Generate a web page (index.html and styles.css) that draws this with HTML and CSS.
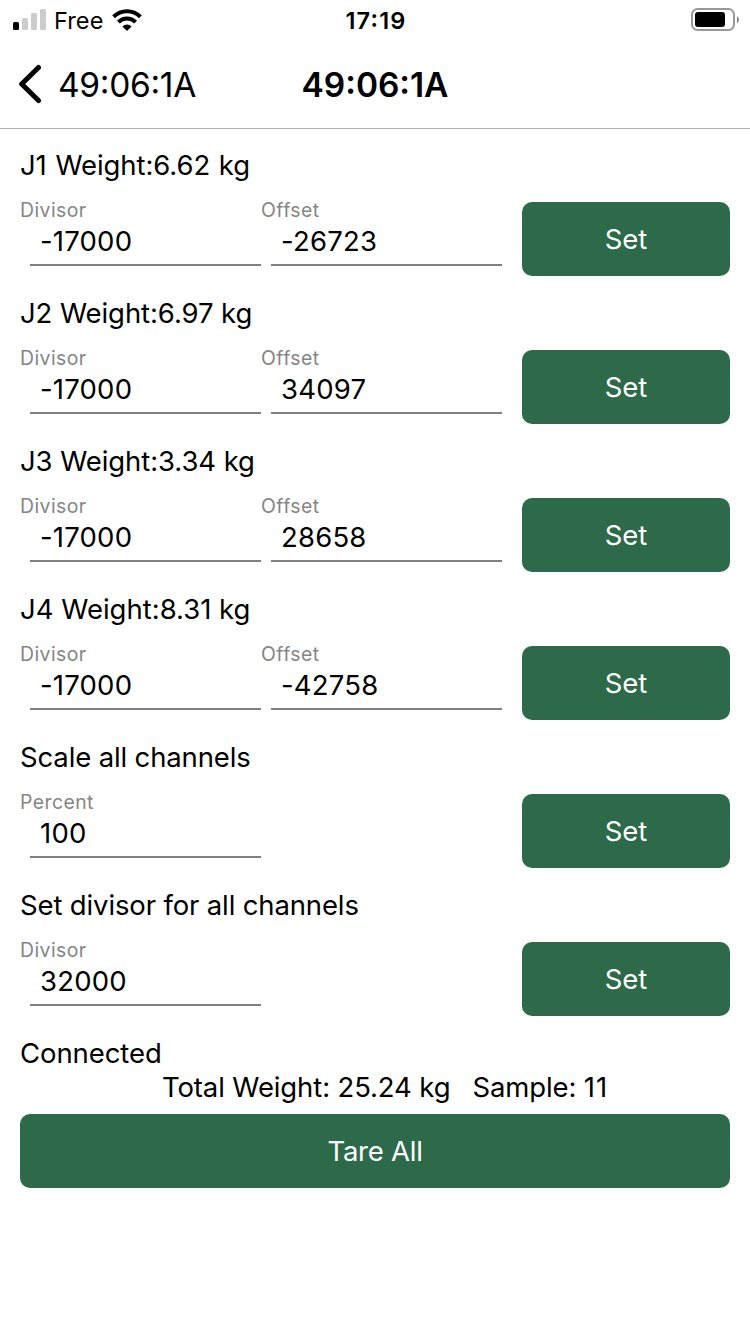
FILE: index.html
```html
<!DOCTYPE html>
<html lang="en">
<head>
<meta charset="utf-8">
<title>49:06:1A</title>
<link rel="stylesheet" href="styles.css">
</head>
<body>
<div class="status">
  <div class="carrier">
    <svg class="signal" width="34" height="22" viewBox="0 0 34 22">
      <rect x="0" y="13" width="6" height="8" rx="1.6" fill="#000"/>
      <rect x="9" y="9" width="6" height="12" rx="1.6" fill="#ccc"/>
      <rect x="18" y="4" width="6" height="17" rx="1.6" fill="#ccc"/>
      <rect x="27" y="0" width="6" height="21" rx="1.6" fill="#ccc"/>
    </svg>
    <span class="operator">Free</span>
    <svg class="wifi" width="30" height="22" viewBox="0 0 30 22">
      <g fill="none" stroke="#000" stroke-width="4">
        <path d="M1.6 7.8A19.2 19.2 0 0 1 28.4 7.8"/>
        <path d="M6.4 13.2A12 12 0 0 1 23.6 13.2"/>
      </g>
      <path d="M15 22L10.4 17.4A6.4 6.4 0 0 1 19.6 17.4Z"/>
    </svg>
  </div>
  <div class="clock">17:19</div>
  <div class="power">
    <svg width="48" height="24" viewBox="0 0 48 24">
      <rect x="1" y="1" width="42" height="21" rx="5.5" fill="none" stroke="#999" stroke-width="2"/>
      <rect x="4" y="4" width="30" height="15" rx="3" fill="#000"/>
      <path d="M46 8Q48 9 48 11.5T46 15Z" fill="#888"/>
    </svg>
  </div>
</div>
<header class="nav">
  <a class="back">
    <svg width="24" height="40" viewBox="0 0 24 40"><path d="M20.5 3.5L3.7 20L20.5 36.5" fill="none" stroke="#000" stroke-width="5" stroke-linecap="round" stroke-linejoin="round"/></svg>
    <span class="back-label">49:06:1A</span>
  </a>
  <h1 class="nav-title">49:06:1A</h1>
</header>
<main class="content">
  <section class="channel">
    <h2 class="heading heading-first">J1 Weight:6.62 kg</h2>
    <div class="row">
      <div class="field"><span class="label">Divisor</span><span class="value">-17000</span></div>
      <div class="field"><span class="label">Offset</span><span class="value">-26723</span></div>
      <button class="button">Set</button>
    </div>
  </section>
  <section class="channel">
    <h2 class="heading">J2 Weight:6.97 kg</h2>
    <div class="row">
      <div class="field"><span class="label">Divisor</span><span class="value">-17000</span></div>
      <div class="field"><span class="label">Offset</span><span class="value">34097</span></div>
      <button class="button">Set</button>
    </div>
  </section>
  <section class="channel">
    <h2 class="heading">J3 Weight:3.34 kg</h2>
    <div class="row">
      <div class="field"><span class="label">Divisor</span><span class="value">-17000</span></div>
      <div class="field"><span class="label">Offset</span><span class="value">28658</span></div>
      <button class="button">Set</button>
    </div>
  </section>
  <section class="channel">
    <h2 class="heading heading-fourth">J4 Weight:8.31 kg</h2>
    <div class="row">
      <div class="field"><span class="label">Divisor</span><span class="value">-17000</span></div>
      <div class="field"><span class="label">Offset</span><span class="value">-42758</span></div>
      <button class="button">Set</button>
    </div>
  </section>
  <section class="channel">
    <h2 class="heading heading-text">Scale all channels</h2>
    <div class="row">
      <div class="field"><span class="label">Percent</span><span class="value">100</span></div>
      <button class="button">Set</button>
    </div>
  </section>
  <section class="channel">
    <h2 class="heading heading-text">Set divisor for all channels</h2>
    <div class="row">
      <div class="field"><span class="label">Divisor</span><span class="value">32000</span></div>
      <button class="button">Set</button>
    </div>
  </section>
  <div class="heading">Connected</div>
  <div class="totals">
    <span>Total Weight: 25.24 kg</span>
    <span class="sample">Sample: <span class="count">11</span></span>
  </div>
  <button class="button button-wide">Tare All</button>
</main>
</body>
</html>
```
FILE: styles.css
```css
* { box-sizing: border-box; }
body {
  margin: 0;
  height: 1334px;
  background: #fff;
  color: #000;
  font-family: Inter, "Liberation Sans", sans-serif;
  font-size: 27.5px;
  overflow: hidden;
}
.status {
  display: grid;
  grid-template-columns: 1fr auto 1fr;
  height: 40px;
  padding: 0 11px 0 13px;
}
.carrier { display: flex; align-items: flex-start; }
.signal { margin-top: 9px; }
.operator { margin-left: 7px; width: 58px; font-size: 23.5px; line-height: 42px; letter-spacing: 0.1px; }
.wifi { margin-top: 9px; }
.clock { font-size: 23.5px; font-weight: 600; line-height: 42px; letter-spacing: 1.2px; font-feature-settings: "case"; }
.power { display: flex; justify-content: flex-end; padding-top: 8px; }
.nav {
  display: grid;
  grid-template-columns: 1fr auto 1fr;
  align-items: center;
  height: 89px;
  border-bottom: 1px solid #b2b2b2;
  padding: 0 18px;
}
.back { display: flex; align-items: center; gap: 16px; }
.back-label { padding-top: 1px; font-size: 33.5px; line-height: 40px; letter-spacing: -0.3px; font-feature-settings: "case"; }
.nav-title { margin: 0; padding-top: 1px; font-size: 33.5px; font-weight: 600; line-height: 40px; letter-spacing: -0.05px; font-feature-settings: "case"; }
.content { padding: 19px 20px 0; }
.channel { padding-bottom: 20px; }
.heading { margin: 0; font-size: 27.5px; font-weight: 400; line-height: 34px; letter-spacing: -0.08px; white-space: nowrap; }
.heading-first { word-spacing: 1px; }
.heading-fourth { letter-spacing: 0; }
.heading-text { letter-spacing: -0.14px; }
.row { display: flex; height: 94px; padding-top: 16px; }
.field { display: flex; flex-direction: column; width: 241px; }
.label { height: 24px; font-size: 19.4px; line-height: 24px; color: #858585; letter-spacing: 0.45px; }
.value {
  height: 44px;
  margin-left: 10px;
  padding-left: 10px;
  line-height: 38px;
  letter-spacing: 0.2px;
  border-bottom: 2px solid #808080;
}
.button {
  width: 208px;
  height: 74px;
  margin: 4px 0 0 auto;
  padding: 0;
  border: 0;
  border-radius: 10px;
  background: #2d6a4a;
  color: #fff;
  font: 400 27.5px/74px Inter, "Liberation Sans", sans-serif;
}
.totals { display: flex; padding-left: 142px; line-height: 34px; letter-spacing: -0.12px; white-space: nowrap; }
.sample { margin-left: 22px; }
.count { letter-spacing: 1px; }
.button-wide { display: block; width: 710px; margin-top: 10px; letter-spacing: -0.25px; }
```
